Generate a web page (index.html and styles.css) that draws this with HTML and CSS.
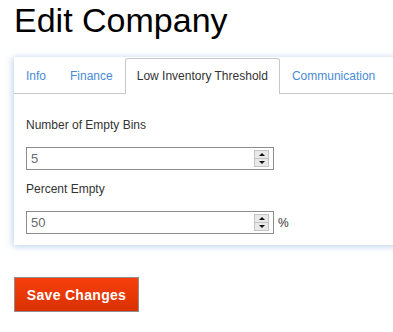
FILE: index.html
```html
<!DOCTYPE html>
<html>
<head>
<meta charset="utf-8">
<link rel="stylesheet" href="styles.css">
</head>
<body>
<div class="page">
  <h1 class="title">Edit Company</h1>
  <div class="panel">
    <div class="tabs">
      <a class="tab">Info</a>
      <a class="tab">Finance</a>
      <a class="tab active">Low Inventory Threshold</a>
      <a class="tab">Communication</a>
    </div>
    <div class="form">
      <div class="label">Number of Empty Bins</div>
      <div class="row">
        <div class="input"><span class="value">5</span><span class="spin"><span class="up"></span><span class="down"></span></span></div>
      </div>
      <div class="label second">Percent Empty</div>
      <div class="row">
        <div class="input"><span class="value">50</span><span class="spin"><span class="up"></span><span class="down"></span></span></div>
        <span class="unit">%</span>
      </div>
    </div>
  </div>
  <button class="save">Save Changes</button>
</div>
</body>
</html>
```
FILE: styles.css
```css
html, body {
  margin: 0;
  padding: 0;
  background: #fff;
  overflow: hidden;
}
body {
  font-family: "Liberation Sans", Arial, sans-serif;
  color: #333;
}
.page {
  padding: 0 0 0 14px;
  overflow: hidden;
}
.title {
  margin: 3px 0 20px;
  font-size: 34px;
  line-height: 34px;
  height: 34px;
  font-weight: normal;
  color: #000;
}
.panel {
  width: 420px;
  background: #fff;
  box-shadow: -1px 1px 7px rgba(110, 155, 215, 0.5);
}
.tabs {
  display: flex;
  padding-top: 1px;
  height: 35px;
  border-bottom: 1px solid #c8c8c8;
  white-space: nowrap;
}
.tab {
  display: block;
  box-sizing: border-box;
  height: 36px;
  line-height: 35px;
  padding: 0 11px;
  border: 1px solid transparent;
  border-bottom: none;
  margin-bottom: -1px;
  font-size: 12px;
  color: #4a8bd8;
}
.tab.active {
  color: #333;
  background: #fff;
  border-color: #c8c8c8;
  border-radius: 3px 3px 0 0;
}
.form {
  padding: 24px 12px 11px;
}
.label {
  font-size: 12px;
  line-height: 15px;
  color: #333;
  margin-bottom: 14px;
}
.label.second {
  margin-top: 12px;
}
.row {
  display: flex;
  align-items: center;
}
.input {
  width: 248px;
  height: 23px;
  box-sizing: border-box;
  border: 1px solid #8c8c8c;
  display: flex;
  align-items: center;
  padding-left: 4px;
}
.value {
  flex: 1;
  font-size: 13px;
  color: #6a6a6a;
}
.spin {
  width: 15px;
  height: 17px;
  margin-right: 4px;
  box-sizing: border-box;
  border: 1px solid #c4c4c4;
  background: #e9e9e9;
  display: flex;
  flex-direction: column;
}
.up, .down {
  flex: 1;
  display: flex;
  align-items: center;
  justify-content: center;
}
.up {
  border-bottom: 1px solid #c4c4c4;
}
.up::after {
  content: "";
  border-left: 3px solid transparent;
  border-right: 3px solid transparent;
  border-bottom: 3px solid #111;
}
.down::after {
  content: "";
  border-left: 3px solid transparent;
  border-right: 3px solid transparent;
  border-top: 3px solid #111;
}
.unit {
  margin-left: 4px;
  font-size: 12px;
  color: #333;
}
.save {
  display: block;
  margin-top: 32px;
  width: 125px;
  height: 35px;
  border: 1px solid #8f8f8f;
  background: linear-gradient(#f73f0c, #da3100);
  color: #fff;
  font-family: "Liberation Sans", Arial, sans-serif;
  font-weight: bold;
  font-size: 14px;
  letter-spacing: 0.3px;
  padding: 0;
}
```
